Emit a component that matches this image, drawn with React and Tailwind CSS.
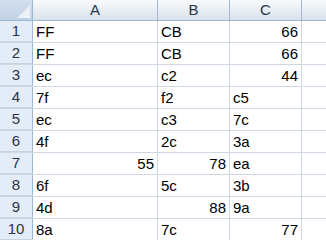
import React from 'react';

const rows = [
  [['FF', 'l'], ['CB', 'l'], ['66', 'r']],
  [['FF', 'l'], ['CB', 'l'], ['66', 'r']],
  [['ec', 'l'], ['c2', 'l'], ['44', 'r']],
  [['7f', 'l'], ['f2', 'l'], ['c5', 'l']],
  [['ec', 'l'], ['c3', 'l'], ['7c', 'l']],
  [['4f', 'l'], ['2c', 'l'], ['3a', 'l']],
  [['55', 'r'], ['78', 'r'], ['ea', 'l']],
  [['6f', 'l'], ['5c', 'l'], ['3b', 'l']],
  [['4d', 'l'], ['88', 'r'], ['9a', 'l']],
  [['8a', 'l'], ['7c', 'l'], ['77', 'r']],
];

const widths = ['w-[125px]', 'w-[72px]', 'w-[72px]'];

function Cell({ value, align, width }) {
  return (
    <div
      className={`${width} shrink-0 h-full border-r border-[#d0d7e5] flex items-center px-[3px] pt-px ${
        align === 'r' ? 'justify-end' : 'justify-start'
      }`}
    >
      {value}
    </div>
  );
}

export default function App() {
  return (
    <div
      className="w-[326px] h-[240px] overflow-hidden bg-white text-[15px] text-black"
      style={{ fontFamily: '"Liberation Sans", Arial, sans-serif' }}
    >
      <div className="flex h-[21px] border-b border-[#9eb6ce] bg-gradient-to-b from-[#f8fafd] to-[#dae2ed] text-[#27364a]">
        <div className="relative w-[33px] shrink-0 h-full border-r border-[#9eb6ce] bg-gradient-to-b from-[#d3dfee] to-[#c2d2e6]">
          <svg className="absolute right-[2px] bottom-[2px]" width="13" height="13" viewBox="0 0 13 13">
            <defs>
              <linearGradient id="tri" x1="0" y1="0" x2="1" y2="1">
                <stop offset="0" stopColor="#dde6f1" />
                <stop offset="1" stopColor="#f4f7fb" />
              </linearGradient>
            </defs>
            <polygon points="13,0 13,13 0,13" fill="url(#tri)" />
          </svg>
        </div>
        {['A', 'B', 'C'].map((l, i) => (
          <div
            key={l}
            className={`${widths[i]} shrink-0 h-full border-r border-[#9eb6ce] flex items-center justify-center`}
          >
            {l}
          </div>
        ))}
        <div className="flex-1" />
      </div>
      {rows.map((r, i) => (
        <div key={i} className="flex h-[22px] border-b border-[#d0d7e5]">
          <div className="w-[33px] shrink-0 h-full -mb-px border-b border-r border-[#9eb6ce] border-b-[#c5d2e3] bg-[#e4ecf7] text-[#27364a] flex items-center justify-center pt-px">
            {i + 1}
          </div>
          {r.map(([v, a], j) => (
            <Cell key={j} value={v} align={a} width={widths[j]} />
          ))}
          <div className="flex-1" />
        </div>
      ))}
    </div>
  );
}
